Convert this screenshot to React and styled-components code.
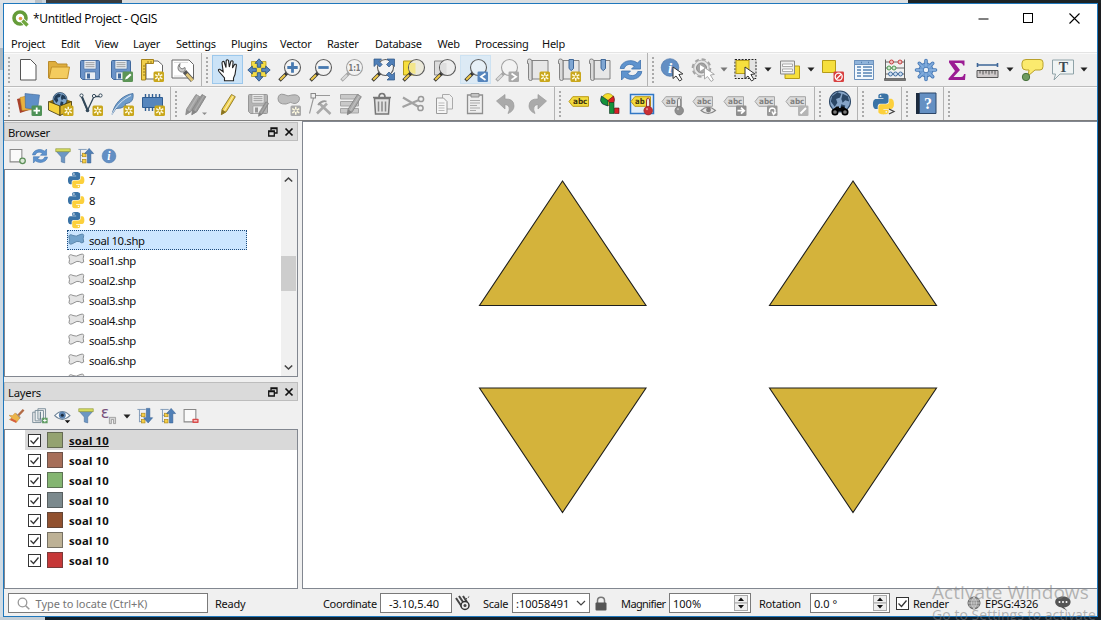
import React from "react";
import styled, { createGlobalStyle } from "styled-components";

const Global = createGlobalStyle`
  * { box-sizing: border-box; }
  html, body { margin: 0; padding: 0; overflow: hidden; }
  body { font-family: "Noto Sans", "Open Sans", sans-serif; font-size: 11px; letter-spacing: -0.25px; color: #101010; }
`;

/* ---------- frame ---------- */
const Desktop = styled.div`
  position: relative;
  width: 1101px;
  height: 620px;
  padding: 3px;
  overflow: hidden;
  background:
    linear-gradient(90deg, #dfe3e7 0 35px, #b9c0c6 35px 42px, #c9d3dc 42px 46px, #393b3d 46px 122px, #dcdfe1 122px 908px, #1d2426 908px) 0 0 / 100% 3px no-repeat,
    linear-gradient(90deg, #c4ced6 0 45px, #12202b 45px) 0 100% / 100% 3px no-repeat,
    linear-gradient(#d9dfe4 0 48px, #aeb9c2 48px 70px, #d0dbe4 70px) 0 0 / 3px 100% no-repeat,
    #1c1d20;
`;
const Window = styled.div`
  display: flex;
  flex-direction: column;
  width: 1095px;
  height: 614px;
  border: 1px solid #1f78bd;
  background: #f0f0f0;
`;
const TitleBar = styled.div`
  display: flex;
  align-items: center;
  flex: 0 0 29px;
  padding-left: 8px;
  background: #fff;
`;
const Title = styled.div`
  flex: 1;
  margin-left: 4px;
  font: 12px "Open Sans", sans-serif;
  letter-spacing: -0.32px;
  color: #000;
`;
const WindowButton = styled.div`
  display: flex;
  justify-content: center;
  width: 45.5px;
`;
const MenuBar = styled.div`
  display: flex;
  flex: 0 0 20px;
  min-height: 0;
  padding-left: 7px;
  background: #fff;
  border-bottom: 1px solid #e4e4e4;
  line-height: 22px;
`;
const MenuItem = styled.div`
  width: ${(p) => p.$w}px;
  white-space: nowrap;
`;

/* ---------- toolbars ---------- */
const ToolRow = styled.div`
  display: flex;
  flex: 0 0 34px;
  border-bottom: 1px solid ${(p) => (p.$last ? "#7d7d7d" : "#bcbcbc")};
  box-shadow: inset 0 1px #fafafa;
`;
const Section = styled.div`
  display: flex;
  align-items: center;
  width: ${(p) => p.$w}px;
  flex-shrink: 0;
  border-right: ${(p) => (p.$open ? 0 : 1)}px solid #b3b3b3;
`;
const Handle = styled.div`
  flex: 0 0 ${(p) => p.$w}px;
  height: 28px;
  background: radial-gradient(circle at 1.2px 1.2px, #aaa 0 1px, transparent 1.3px) 4px 1px / 100px 4px repeat-y;
`;
const ToolButton = styled.div`
  display: flex;
  align-items: center;
  justify-content: center;
  flex: 0 0 31px;
  height: 29px;
  border: 1px solid ${(p) => (p.$on ? (p.$soft ? "#cde2f2" : "#9cc8ec") : "transparent")};
  background: ${(p) => (p.$on ? (p.$soft ? "#dceaf5" : "#cbe3f7") : "transparent")};
`;
const Drop = styled.div`
  flex: 0 0 12.5px;
  display: flex;
  justify-content: center;
`;
const Glyph = styled.svg`
  display: block;
  flex: none;
  overflow: visible;
  letter-spacing: 0;
`;

/* ---------- panels ---------- */
const Body = styled.div`
  display: flex;
  flex: 0 0 468px;
`;
const Side = styled.div`
  width: 294px;
  padding-top: 1px;
`;
const DockTitle = styled.div`
  display: flex;
  align-items: center;
  height: 19px;
  padding: 0 2px 0 3px;
  background: #dadada;
  border: 1px solid #bdbdbd;
  font-size: 11.3px;
  gap: 5px;
`;
const DockName = styled.span`
  flex: 1;
  padding-top: 2px;
`;
const DockTools = styled.div`
  display: flex;
  align-items: center;
  height: 28px;
  padding: 2px 0 0 4px;
  gap: 5px;
`;
const Tree = styled.div`
  display: flex;
  height: 208px;
  margin-bottom: 5px;
  border: 1px solid #828790;
  background: #fff;
  overflow: hidden;
`;
const TreeRows = styled.div`
  flex: 1;
  padding-left: 62px;
`;
const TreeRow = styled.div`
  display: flex;
  align-items: center;
  gap: 4px;
  width: 180px;
  height: 20px;
  padding-left: 1px;
  outline: ${(p) => (p.$on ? "1px dotted #1c4a7c" : "0")};
  outline-offset: -1px;
  background: ${(p) => (p.$on ? "#cce6ff" : "transparent")};
`;
const RowText = styled.span`
  padding-top: 1px;
  font-size: 11.3px;
  letter-spacing: -0.38px;
`;
const Scroll = styled.div`
  display: flex;
  flex-direction: column;
  align-items: center;
  width: 16px;
  padding: 7px 1px 6px 0;
  background: #f0f0f0;
`;
const Thumb = styled.div`
  width: 15px;
  height: 35px;
  margin: 74px 0 auto;
  background: #cdcdcd;
`;
const LayerList = styled.div`
  height: 160px;
  padding-left: 20px;
  border: 1px solid #828790;
  background: #fff;
`;
const LayerRow = styled.div`
  display: flex;
  align-items: center;
  height: 20px;
  padding-left: 3px;
  background: ${(p) => (p.$on ? "#d9d9d9" : "#fff")};
  font-weight: 700;
  font-size: 11.3px;
  letter-spacing: 0.15px;
  text-decoration: ${(p) => (p.$on ? "underline" : "none")};
`;
const Swatch = styled.div`
  width: 16px;
  height: 16px;
  margin: 0 6px;
  background: ${(p) => p.$c};
  border: 1px solid rgba(60, 60, 60, 0.55);
`;
const Canvas = styled.div`
  width: 795px;
  margin-left: 4px;
  border: 1px solid #828790;
  border-right: 0;
  background: #fff;
`;

/* ---------- status bar ---------- */
const Status = styled.div`
  display: flex;
  align-items: center;
  flex: 1;
  padding: 1px 0 0 4px;
`;
const StatusText = styled.div`
  width: ${(p) => p.$w}px;
  margin-left: ${(p) => p.$ml || 0}px;
  padding-top: 1px;
  white-space: nowrap;
  letter-spacing: ${(p) => (p.$ls === undefined ? -0.25 : p.$ls)}px;
`;
const Field = styled.div`
  display: flex;
  align-items: center;
  width: ${(p) => p.$w}px;
  height: 20px;
  margin-left: ${(p) => p.$ml || 0}px;
  padding: 0 2px 0 ${(p) => p.$pl || 3}px;
  border: 1px solid #7a7a7a;
  background: #fff;
  color: ${(p) => p.$c || "#101010"};
  white-space: nowrap;
`;
const Value = styled.span`
  flex: 1;
  padding-top: 1px;
  letter-spacing: ${(p) => p.$ls || 0}px;
`;
const StatusIcon = styled.div`
  width: ${(p) => p.$w}px;
  margin-left: ${(p) => p.$ml || 0}px;
`;
const Watermark = styled.div`
  position: absolute;
  left: 932px;
  top: 580px;
  white-space: nowrap;
  font-family: "Open Sans", sans-serif;
  letter-spacing: 0.05px;
  color: rgba(125, 125, 125, 0.55);
`;
const MarkTitle = styled.div`
  font-size: 19px;
  line-height: 25px;
`;
const MarkLine = styled.div`
  font-size: 14px;
  line-height: 20px;
`;

/* ---------- shared drawing parts ---------- */
const G = ({ s = 24, v = 24, h, vh, children }) => (
  <Glyph width={s} height={h || s} viewBox={`0 0 ${v} ${vh || v}`} fill="none">{children}</Glyph>
);
const Star = ({ x = 13.5, y = 13.5, c = "#c9a71c" }) => (
  <g transform={`translate(${x} ${y})`}>
    <rect width="10.5" height="10.5" rx="1.5" fill={c} />
    <path d="M5.25 1.2v8.1M1.7 3.2l7.1 4.1M1.7 7.3l7.1-4.1" stroke="#fffbe0" strokeWidth="1.5" />
    <circle cx="5.25" cy="5.25" r="1.2" fill={c} />
  </g>
);
const Lens = ({ gray, fill = "#f3f3f3", children }) => (
  <>
    <path d="M1.5 22.5 9 15" stroke={gray ? "#a5a5a5" : "#333"} strokeWidth="3.4" />
    <path d="M2.2 21.8 7 17" stroke={gray ? "#dadada" : "#edc94c"} strokeWidth="2" />
    <circle cx="14.5" cy="9.5" r="8" fill={fill} stroke={gray ? "#a0a0a0" : "#5c5c5c"} strokeWidth="1.1" />
    {children}
  </>
);
const Arrow = ({ x = 11, y = 10, gray }) => (
  <path transform={`translate(${x} ${y})`} d="M0 0v11.5l3-2.5 3.6 5 2.3-1.5-3-5 4-.6z" fill="#fff" stroke={gray ? "#aaa" : "#333"} strokeWidth="1" />
);
const PY = "M14.25.18l.9.2.73.26.59.3.45.32.34.34.25.34.16.33.1.3.04.26.02.2-.01.13V8.5l-.05.63-.13.55-.21.46-.26.38-.3.31-.33.25-.35.19-.35.14-.33.1-.3.07-.26.04-.21.02H8.77l-.69.05-.59.14-.5.22-.41.27-.33.32-.27.35-.2.36-.15.37-.1.35-.07.32-.04.27-.02.21v3.06H3.17l-.21-.03-.28-.07-.32-.12-.35-.18-.36-.26-.36-.36-.35-.46-.32-.59-.28-.73-.21-.88-.14-1.05-.05-1.23.06-1.22.16-1.04.24-.87.32-.71.36-.57.4-.44.42-.33.42-.24.4-.16.36-.1.32-.05.24-.01h.16l.06.01h8.16v-.83H6.18l-.01-2.75-.02-.37.05-.34.11-.31.17-.28.25-.26.31-.23.38-.2.44-.18.51-.15.58-.12.64-.1.71-.06.77-.04.84-.02 1.27.05zm-6.3 1.98l-.23.33-.08.41.08.41.23.34.33.22.41.09.41-.09.33-.22.23-.34.08-.41-.08-.41-.23-.33-.33-.22-.41-.09-.41.09z";
const Py = () => (
  <>
    <path d={PY} fill="#3a73a6" />
    <path d={PY} fill="#fcd03c" transform="rotate(180 12 12)" />
  </>
);
const Tag = ({ gray, text = "abc", children }) => (
  <>
    <path d="M1 9.500 4.800 4.700H20.500V14.300H4.800z" fill={gray ? "#dcdcdc" : "#f2da3c"} stroke={gray ? "#a6a6a6" : "#bb9a14"} strokeWidth="1" />
    <text x="5" y="12.200" fontFamily="DejaVu Sans" fontSize="7.800" fontWeight="700" textLength={text.length * 4.8} lengthAdjust="spacingAndGlyphs" fill={gray ? "#808080" : "#3d3510"}>{text}</text>
    {children}
  </>
);
const Pin = ({ c, d }) => (
  <>
    <path d="M16.500 9q0-3 1.600-3t1.600 3v7h-3.200z" fill="#eee" stroke={d} strokeWidth=".9" />
    <circle cx="18.200" cy="18.600" r="4.300" fill={c} stroke={d} strokeWidth=".7" />
    <circle cx="17" cy="17.200" r="1.100" fill="#fff" opacity=".45" />
  </>
);
const Floppy = ({ c = "#6b93c8", d = "#40689c", l = "#e9eef4" }) => (
  <>
    <path d="M2.500 3.500q0-1 1-1h17q1 0 1 1v17q0 1-1 1H4.500l-2-2z" fill={c} stroke={d} />
    <path d="M6 2.500h12v8.500H6z" fill={l} stroke={d} strokeWidth=".6" />
    <path d="M7.500 4.700h9M7.500 6.700h9M7.500 8.700h9" stroke="#888" strokeWidth=".8" />
    <path d="M7 14h10.500v7.500H7z" fill={l} stroke={d} strokeWidth=".6" />
    <path d="M9 15.500h3v5H9z" fill={d} />
  </>
);
const Refresh = () => (
  <>
    <path d="M1.200 10.500C2 3.500 12 0 18.500 5l3-3v9h-9l3-3C11 5 6.500 6.500 5.200 10.500z" fill="#5e93ce" stroke="#3d71ad" strokeWidth=".8" />
    <path d="M22.800 13.500C22 20.500 12 24 5.500 19l-3 3v-9h9l-3 3c4.500 3 9 1.500 10.300-2.500z" fill="#5e93ce" stroke="#3d71ad" strokeWidth=".8" />
  </>
);
const Page = () => <path d="M4.500 1.500h10l5.500 5.500v15h-15.500z" fill="#fff" stroke="#555" />;
const Book = () => (
  <>
    <path d="M6 2.500h16v18.500H6z" fill="#e7e7e7" stroke="#777" strokeWidth=".9" />
    <path d="M1.500 2.500q0-1.500 2-1.500t2.500 2v17.500q1 2-1.500 2-2 0-2-2V5.500h-1z" fill="#dadada" stroke="#777" strokeWidth=".9" />
  </>
);
const Ribbon = ({ x = 12 }) => <path d={`M${x} 1.500h4.500v9l-2.250 2.200-2.250-2.200z`} fill="#7fa6d2" stroke="#345f92" strokeWidth=".9" />;
const Globe = ({ cx = 12, cy = 9, r = 8, c = "#7fa7ce", d = "#203c58" }) => (
  <g transform={`translate(${cx} ${cy}) scale(${r / 8})`}>
    <circle r="8" fill={c} stroke={d} strokeWidth=".8" />
    <path d="M-6-4l4-3 3 1-1 3-3 1 1 3-2 3-3-4zM2-6l4 2 1 4-3-1-2 2-1-3zM1 2l3 1-1 4-3-1z" fill={d} />
  </g>
);
const Funnel = () => (
  <>
    <path d="M2 5h20l-7.500 8.500V22l-5-1.500v-7z" fill="#6c97c4" stroke="#4a709a" strokeWidth=".8" />
    <path d="M1.500 1.500h21v4.200h-21z" fill="#d5dc5e" stroke="#8b9338" strokeWidth=".9" />
  </>
);
const TreeArrow = ({ down }) => (
  <>
    <path d="M1 2.500h12M4 2.500v18.500M4 11h5M4 20h5" stroke="#7b95b5" strokeWidth="1.300" />
    <rect x="7" y="8" width="5" height="5" fill="#f5cf47" stroke="#b08a1b" />
    <rect x="7" y="17" width="5" height="5" fill="#f5cf47" stroke="#b08a1b" />
    <path d="M16.500 1l6.500 7.500h-4V22h-5V8.500h-4z" fill="#4f7fb6" stroke="#2f5b8f" strokeWidth=".8" transform={down ? "rotate(180 16.500 11.500)" : undefined} />
  </>
);
const Info = ({ cx = 12, cy = 12, r = 9.500 }) => (
  <>
    <circle cx={cx} cy={cy} r={r} fill="#638fc4" stroke="#4a76aa" strokeWidth=".7" />
    <text x={cx} y={cy + r * 0.580} textAnchor="middle" fontFamily="Liberation Serif" fontStyle="italic" fontWeight="700" fontSize={r * 1.700} fill="#fff">i</text>
  </>
);
const Pencil = ({ c = "#f1d14d", d = "#8a7420", x = 0, shine = 0.55 }) => (
  <g transform={`translate(${x} 0)`}>
    <path d="M16.500 2.500l3.800 2.200-9 15-5 3 .8-5.500z" fill={c} stroke={d} strokeWidth=".9" />
    <path d="M18.300 3.800l-9 15" stroke="#fff" opacity={shine} strokeWidth="1.200" />
    <path d="M7 17.500l4 2.400-4.700 2.800z" fill={d} />
  </g>
);
const Badge = ({ c, children, x = 13.500, y = 13.500 }) => (
  <g transform={`translate(${x} ${y})`}>
    <rect width="10.500" height="10.500" rx="1.300" fill={c} />
    {children}
  </g>
);
const Caret = ({ c = "#222" }) => <G s={8} v={8} h={5} vh={5}><path d="M.5.5h7L4 4.500z" fill={c} /></G>;

/* ---------- icons ---------- */
const I = {
  newFile: <Page />,
  open: <><path d="M1.500 20V3.500h7l2 2.500H20v4" fill="#dfae3d" stroke="#b98b2c" /><path d="M2 20.500 4.500 9H22.500L20.500 20.500z" fill="#f4cc5f" stroke="#c2922c" /></>,
  save: <Floppy />,
  saveAs: <><Floppy /><Badge c="#5c9556"><path d="M2.500 8l1-2.500L7.500 2 9 3.500 5 7.300z" fill="#fff" /></Badge></>,
  layout: <><path d="M6 3h12l4.500 4v14H6z" fill="#fff" stroke="#666" /><path d="M1.500 1.500h12v4h-8V22h-4z" fill="#f1cf4b" stroke="#a5821c" /><path d="M3 8h2M3 11h2M3 14h2M3 17h2M8 3v2M11 3v2" stroke="#7c6215" strokeWidth=".8" /><Star /></>,
  manager: <><path d="M1 2h17l4.500 4.500V20H1z" fill="#fff" stroke="#666" /><path d="M3 4.500h14M3 18h9" stroke="#ddd" /><path d="M13.500 13.500l8 9" stroke="#555" strokeWidth="4.500" /><path d="M15.500 16l6 6.500" stroke="#e1c779" strokeWidth="3" /><path d="M9 5.500l-.5 3.500 2.500 2 3-1.500c1 3-1 5-3.500 4.500C7 13.500 5.500 9 9 5.500z" fill="#ccc" stroke="#666" strokeWidth=".8" /></>,
  hand: <path d="M8.500 22.800V20L3 13.500q-1.500-2.500.8-2.300l3.400 2.600L6 5q.2-2 2-1.500L10 9.500 10.200 2.500q1-1.600 2.300 0L13.300 9l1.600-5.800q1.500-1 2.200.5L16.500 10l2.200-3.700q1.600-.5 1.700 1L19 16.500 17.500 20v2.800z" fill="#fff" stroke="#222" strokeWidth="1.100" />,
  pan: <><path d="M4.500 3.500h14.500v15H4.500z" fill="#f6dd43" stroke="#a98f16" strokeWidth=".7" /><path d="M12 .8l4 4.500h-2.300v4h-3.400v-4H8zM12 23.200l4-4.500h-2.300v-4h-3.400v4H8zM.8 12l4.500-4v2.300h4v3.400h-4V16zM23.200 12l-4.500-4v2.300h-4v3.400h4V16z" fill="#5585bf" stroke="#284f80" strokeWidth=".8" /></>,
  zoomIn: <Lens><path d="M14.500 4.300v10.400M9.300 9.500h10.400" stroke="#4779b0" strokeWidth="2.800" /></Lens>,
  zoomOut: <Lens><path d="M9.300 9.500h10.400" stroke="#4779b0" strokeWidth="2.800" /></Lens>,
  zoomOne: <Lens gray><text x="14.500" y="12.600" textAnchor="middle" fontFamily="DejaVu Sans" fontWeight="700" fontSize="8.500" textLength="12" lengthAdjust="spacingAndGlyphs" fill="#777">1:1</text></Lens>,
  zoomFull: <><rect x="7" y="4" width="12" height="12" fill="#eee" /><Lens><path d="M3 1h7.500L8.200 3.500l3 3-2.500 2.500-3-3L3 8.500zM23.500 1v7.500L21 6l-3 3-2.500-2.500 3-3L16 1zM23.500 22V14.500L21 17l-3-3-2.500 2.500 3 3L16 22z" fill="#4f7fb8" stroke="#2c5383" strokeWidth=".7" /></Lens></>,
  zoomSel: <><path d="M1.500 3h12v14h-12z" fill="#f7df3d" stroke="#b49b1b" /><Lens fill="#eceadb"><path d="M8 5h5.500v11q-7-1-6.500-7z" fill="#f3e68a" /></Lens></>,
  zoomLayer: <><path d="M1.500 3h12v14h-12z" fill="#dcdcdc" stroke="#888" /><Lens fill="#ededed"><path d="M8 5h5.500v11q-7-1-6.500-7z" fill="#dedede" /></Lens></>,
  zoomLast: <Lens fill="#e7f0f7"><Badge c="#5685bd"><path d="M8 2L3.300 5.200 8 8.500" stroke="#fff" strokeWidth="1.700" /></Badge></Lens>,
  zoomNext: <Lens gray><Badge c="#a9a9a9"><path d="M3 2l4.700 3.200L3 8.500" stroke="#fff" strokeWidth="1.700" /></Badge></Lens>,
  newBook: <><Book /><Star /></>,
  newMark: <><Book /><Ribbon /><Star /></>,
  showMark: <><Book /><Ribbon x={13} /></>,
  refresh: <Refresh />,
  identify: <><Info cx={10} cy={9.500} r={8.800} /><Arrow x={13} y={9} /></>,
  action: <><circle cx="10.500" cy="10" r="8.300" stroke="#a3a3a3" strokeWidth="3" strokeDasharray="3.800 2.700" /><circle cx="10.500" cy="10" r="7.800" fill="#e6e6e6" stroke="#b3b3b3" /><circle cx="10.500" cy="10" r="5" fill="#a5a5a5" stroke="#8c8c8c" /><path d="M9 7v6l5-3z" fill="#fff" /><Arrow gray x={13.500} y={9.500} /></>,
  select: <><rect x="1" y="1.500" width="21" height="19" fill="#e3e3e3" stroke="#222" strokeDasharray="2 1.300" /><rect x="2" y="2.500" width="13" height="13" fill="#f6df3d" stroke="#b69c18" /><Arrow x={11} y={9} /></>,
  form: <><path d="M7 8h14.500v12.500H7z" fill="#f6df3d" stroke="#b69c18" /><path d="M2.500 3h14v13h-14z" fill="#ededed" stroke="#888" /><path d="M4.500 6h10v2.500h-10zM4.500 11h10v2.500h-10z" fill="#fff" stroke="#999" strokeWidth=".8" /></>,
  deselect: <><path d="M1.500 2.500h13v12h-13z" fill="#f6df3d" stroke="#b69c18" /><Badge c="#d84040" x={12.500}><circle cx="5.200" cy="5.200" r="3.500" stroke="#fff" strokeWidth="1.300" /><path d="M3 7.500l4.500-4.500" stroke="#fff" strokeWidth="1.300" /></Badge></>,
  table: <><path d="M2.500 2.500h19v19h-19z" fill="#f3f8fd" stroke="#6a90bc" /><path d="M2.500 2.500h19v4h-19z" fill="#8fb3da" stroke="#6a90bc" /><path d="M5 9h4M11 9h9M5 12h4M11 12h9M5 15h4M11 15h9M5 18h4M11 18h9M9 4.500h1M16 4.500h1" stroke="#5682b4" strokeWidth="1.300" /></>,
  abacus: <><path d="M2.500 1.500v20M21.500 1.500v20M2.500 4h19M2.500 10h19M2.500 16h19" stroke="#555" strokeWidth=".9" /><path d="M1.500 20.500h21v2h-21z" fill="#777" stroke="#444" strokeWidth=".6" /><g strokeWidth=".9"><g fill="#eec1c1" stroke="#c03030"><circle cx="8.500" cy="4" r="2" /><circle cx="17" cy="4" r="2" /></g><g fill="#cfe8cf" stroke="#3f8e43"><circle cx="6" cy="10" r="2" /><circle cx="11" cy="10" r="2" /></g><g fill="#cfdff2" stroke="#35649a"><circle cx="7.500" cy="16" r="2" /><circle cx="12.500" cy="16" r="2" /><circle cx="17.500" cy="16" r="2" /></g></g></>,
  gear: <><g stroke="#4678b5" strokeWidth="3.600" strokeLinecap="round"><path d="M12 2.500v19M2.500 12h19M5.300 5.300l13.400 13.400M18.700 5.300L5.300 18.700" /></g><circle cx="12" cy="12" r="7" fill="#6d9cd2" stroke="#4678b5" /><g stroke="#82acdc" strokeWidth="1.800" strokeLinecap="round"><path d="M12 2.500v19M2.500 12h19M5.300 5.300l13.400 13.400M18.700 5.300L5.300 18.700" /></g><circle cx="12" cy="12" r="2.800" fill="#eef3f8" stroke="#4678b5" /></>,
  sum: <path d="M4 2.500h15.500v5H18q0-2.500-3-2.500H9.500l5.500 7-6.500 7H16q2.500 0 3-3h1.500l-.5 6H3.500v-1.500L10 13 4 4.500z" fill="#9b1c93" />,
  ruler: <><path d="M1 7h21M1.500 5v4M21.500 5v4" stroke="#3d6597" strokeWidth="1.600" /><path d="M1 12.500h21v7H1z" fill="#cfcaca" stroke="#555" /><path d="M4 12.500v3M7 12.500v4M10 12.500v3M13 12.500v4M16 12.500v3M19 12.500v4" stroke="#444" strokeWidth=".9" /></>,
  tip: <><path d="M6 1.500h14q3 0 3 3v4q0 3.500-3 3.500h-5l-7 6 1-6H6q-4 0-4-4v-3q0-3.500 4-3.500z" fill="#fbea6e" stroke="#b9a12b" /><circle cx="6" cy="19" r="3.700" fill="#6f9c5e" stroke="#47703d" /></>,
  textAnn: <><path d="M1.500 2h21v14H9l-6 6 1.500-6h-3z" fill="#f0f4f4" stroke="#8fa3a8" /><text x="12.500" y="13.500" textAnchor="middle" fontFamily="Liberation Serif" fontWeight="700" fontSize="14" fill="#3d4b52">T</text></>,

  dataSource: <><path d="M0 7l12-3 3 13-12 4z" fill="#a8402a" /><path d="M3 5.500l13-3 1 15-12 1z" fill="#e9b13e" stroke="#b5801c" strokeWidth=".5" /><path d="M8 1.500l14.500 1.500-2 14.500-12-1.500z" fill="#5f8fc7" stroke="#3f6a9f" strokeWidth=".6" /><Badge c="#4f9257" x={14.500}><path d="M5.200 2v6.500M2 5.200h6.500" stroke="#fff" strokeWidth="1.800" /></Badge></>,
  geopackage: <><path d="M.5 9.500 12 5l12 4.500L12 15z" fill="#8a6c10" /><Globe cx={12} cy={7.500} r={7} /><path d="M.5 9.500 12 14v9.500L.5 18z" fill="#f4d23c" stroke="#3a300a" strokeWidth=".8" /><path d="M23.500 9.500 12 14v9.500l11.500-5.500z" fill="#d9b22b" stroke="#3a300a" strokeWidth=".8" /><Star x={15} /></>,
  shape: <><path d="M2.500 4l6 14.500L15 4.500h6" stroke="#34495a" strokeWidth="1.300" /><path d="M3 5l5.500 13" stroke="#34495a" strokeWidth="2" /><g fill="#fff" stroke="#34495a"><circle cx="2.500" cy="3.500" r="1.600" /><circle cx="15" cy="4" r="1.600" /><circle cx="21.500" cy="3.500" r="1.600" /></g><circle cx="8.500" cy="18.500" r="1.800" fill="#34495a" /><Star /></>,
  feather: <><path d="M2 22.500C4 12 12 3 23 1.500q1 6-3 9l-5 1.500 1 1.500q-5 3.500-10 3z" fill="#6e9ccb" stroke="#3f6a99" strokeWidth=".8" /><path d="M1.500 23C6 14 13 7 21 3.500" stroke="#e3edf6" strokeWidth=".9" /><Star /></>,
  chip: <><path d="M4.500 2v17M8 2v17M11.500 2v17M15 2v17M18.500 2v17" stroke="#315e92" strokeWidth="1.400" /><path d="M1.500 5.500h20v10h-20z" fill="#5686bd" stroke="#2f5d92" /><Star /></>,
  edits: <><Pencil c="#a4a4a4" d="#8e8e8e" x={-4.500} shine={0.2} /><Pencil c="#989898" d="#858585" x={1.500} shine={0.2} /><path d="M18 20.500h5l-2.500 2.500z" fill="#8d8d8d" /></>,
  edit: <Pencil />,
  saveEdits: <><Floppy c="#b5b5b5" d="#979797" l="#ececec" /><g transform="translate(8 8) scale(.72)"><Pencil c="#999" d="#808080" shine={0.2} /></g></>,
  polygon: <><path d="M1 6.500Q1.500 1 7 2.500q4 2.500 8 .5 7-1 7.500 3.500-.5 5-5.500 5-3-2.500-8 .5Q1 12.500 1 6.500z" fill="#bdbdbd" stroke="#999" /><Star c="#a9a9a9" /></>,
  vertex: <><path d="M1.500 21.500L6 4M4.500 3.500H22" stroke="#999" strokeWidth="1.100" /><rect x="3" y="1.500" width="4.500" height="4.500" fill="#eee" stroke="#888" /><path d="M9 21.500l10-10M11 11l11.500 11" stroke="#aaa" strokeWidth="2.600" /><path d="M10 13q4-5 8.500-3.500" stroke="#999" strokeWidth="1.800" /></>,
  attrs: <><path d="M1.500 2.500h18v4.500h-18zM1.500 9.500h18V14h-18zM1.500 16.500h18V21h-18z" fill="#c9c9c9" stroke="#a5a5a5" /><Pencil c="#aaa" d="#858585" x={2} shine={0.25} /></>,
  trash: <><path d="M4.500 6.500h15l-1 15.500h-13z" fill="#e2e2e2" stroke="#777" strokeWidth="1.500" /><path d="M3 5.500h18M9 5q0-3.500 3-3.500t3 3.500" stroke="#777" strokeWidth="1.700" /><path d="M8.500 9.500v10M12 9.500v10M15.500 9.500v10" stroke="#888" strokeWidth="1.500" /></>,
  cut: <><path d="M2 5.500l15 9M1.500 15L18 8" stroke="#a2a2a2" strokeWidth="2.200" /><circle cx="20" cy="7" r="2.600" stroke="#999" strokeWidth="1.500" /><circle cx="19.500" cy="16" r="2.600" stroke="#999" strokeWidth="1.500" /></>,
  copy: <><path d="M10.500 2.500h7l3 3V17h-10z" fill="#f0f0f0" stroke="#aaa" /><path d="M4.500 6h7l3.500 3.500v12H4.500z" fill="#f6f6f6" stroke="#9a9a9a" /><path d="M6.500 11h6M6.500 13.500h6M6.500 16h6M6.500 18.500h6" stroke="#bbb" /></>,
  paste: <><path d="M4.500 3h15v18.500h-15z" fill="#eee" stroke="#8f8f8f" strokeWidth="1.300" /><path d="M8 1.500h8V5H8z" fill="#c5c5c5" stroke="#8f8f8f" /><path d="M7 8.500h10M7 11h10M7 13.500h7M7 16h10M7 18.500h6" stroke="#aaa" /></>,
  undo: <path d="M2.500 9L11 2.500V7q9-.5 9 7 0 5-6 7.500 2-4 1-6.500-1-2.500-4-2.500v4.500z" fill="#aaa" stroke="#999" strokeWidth=".7" />,
  redo: <path d="M21.500 9L13 2.500V7q-9-.5-9 7 0 5 6 7.500-2-4-1-6.500 1-2.500 4-2.500v4.500z" fill="#aaa" stroke="#999" strokeWidth=".7" />,
  label: <Tag />,
  diagram: <><circle cx="9" cy="7.500" r="6" fill="#f6df2c" stroke="#8a7a10" strokeWidth=".6" /><path d="M9 8.500L2.500 4Q0 9 3.500 12L9 14z" fill="#15923a" stroke="#114" strokeWidth=".6" /><path d="M9 8.500l5.500-4.500q2.500 6-2 9.500z" fill="#d81f26" stroke="#411" strokeWidth=".6" /><path d="M10.500 10.500H15v11h-4.500z" fill="#15923a" stroke="#132" strokeWidth=".6" /><path d="M15.500 16h4.500v5.500h-4.500z" fill="#d81f26" stroke="#411" strokeWidth=".6" /></>,
  pinOn: <><rect x=".5" y="2.500" width="23" height="19" fill="#e2edf8" stroke="#3177c5" strokeWidth="1.500" /><Tag text="ab"><Pin c="#c92f35" d="#8d2126" /></Tag></>,
  pin: <Tag gray text="ab"><Pin c="#8f8f8f" d="#757575" /></Tag>,
  eye: <Tag gray><path d="M9 18.500q7-6.500 14.500 0-7.500 6-14.500 0z" fill="#e9e9e9" stroke="#888" strokeWidth="1.100" /><circle cx="16.500" cy="18" r="2.400" fill="#808080" /></Tag>,
  move: <Tag gray><Badge c="#8f8f8f" x={13}><path d="M1.500 5.200h6M5 2.200l3.200 3L5 8.200" stroke="#fff" strokeWidth="1.800" /></Badge></Tag>,
  rotate: <Tag gray><Badge c="#999" x={13}><path d="M2.500 6.500q-.5-4 3-4 3 .2 2.500 3.500L7 8M5 6l1.500 3L9 6.500" stroke="#fff" strokeWidth="1.400" /></Badge></Tag>,
  change: <Tag gray><Badge c="#b5b5b5" x={13}><path d="M2.500 8L8 2.500" stroke="#fff" strokeWidth="2" /></Badge></Tag>,
  search: <><Globe cx={12} cy={9.500} r={10.500} c="#86a5c8" d="#2b4766" /><path d="M4 18.500L8.500 14.500h2.500v1.500h2v-1.500h2.500l4.500 4" fill="#080808" /><path d="M9 18h6" stroke="#080808" strokeWidth="3" /><circle cx="7" cy="20" r="2.700" fill="#777" stroke="#000" strokeWidth="1.700" /><circle cx="17" cy="20" r="2.700" fill="#777" stroke="#000" strokeWidth="1.700" /></>,
  console: <><g transform="translate(1 1.500) scale(.87)"><Py /></g><path d="M17 17l5 2.500-5 2.500" stroke="#444" strokeWidth="1.300" /></>,
  help: <><path d="M2 1h4v21H2z" fill="#1c2b3e" /><path d="M5.500 1H22v20.500H5.500z" fill="#6590c3" stroke="#2c4668" /><text x="14" y="17" textAnchor="middle" fontFamily="Liberation Serif" fontWeight="700" fontSize="16" fill="#fff">?</text></>,
};

const D = {
  add: <><path d="M2 2.500h17v18H2z" fill="#fafafa" stroke="#888" strokeWidth="1.500" /><circle cx="20" cy="19" r="4" fill="#dbe8d8" stroke="#5c8f58" strokeWidth="1.800" /></>,
  refresh: <Refresh />,
  funnel: <Funnel />,
  up: <TreeArrow />,
  down: <TreeArrow down />,
  info: <Info r={10} />,
  brush: <><path d="M13 12L21.500 3" stroke="#b26b45" strokeWidth="3.500" /><path d="M10 9l6.500 6" stroke="#999" strokeWidth="3" /><path d="M9.500 7.500L16 15l-5 6.500L1 17l4-2-4.500-4 5 .5z" fill="#ecb54a" stroke="#c78a35" strokeWidth=".8" /><path d="M3 16.500l8 4" stroke="#d75d42" strokeWidth="2.500" /></>,
  group: <><path d="M1.500 6.500h12v15h-12z" fill="#eee" stroke="#7d8f9b" strokeWidth="1.400" /><path d="M5 4h12v15H5z" fill="#eef1f2" stroke="#7d8f9b" strokeWidth="1.400" /><path d="M9 1.500h11v15H9z" stroke="#7d8f9b" strokeWidth="1.400" /><path d="M12.500 17V6" stroke="#57707f" strokeWidth="1.500" /><rect x="15" y="14.500" width="8" height="8" fill="#5f9c63" /><path d="M19 16v5M16.500 18.500h5" stroke="#fff" strokeWidth="1.400" /></>,
  eye: <><path d="M0 11.500q11-12 22 0-11 10.500-22 0z" fill="#fff" stroke="#71869a" strokeWidth="1.700" /><circle cx="11" cy="11" r="5" fill="#5b84b2" /><circle cx="11" cy="11" r="2.200" fill="#1d2e42" /><path d="M14.500 18h8l-4 4.500z" fill="#111" /></>,
  eps: <><text x="0" y="14.500" fontFamily="DejaVu Sans" fontSize="23" fill="#78527c">ε</text><path d="M12.500 23v-9h9V23h-3v-6h-3v6z" fill="#d5d5d5" stroke="#888" /></>,
  remove: <><path d="M2 2.500h17v18H2z" fill="#fafafa" stroke="#888" strokeWidth="1.500" /><rect x="14" y="16" width="9" height="6" rx="1" fill="#d94d4d" /><path d="M16 19h5" stroke="#fff" strokeWidth="1.500" /></>,
};

const Btn = ({ k, on, soft }) => <ToolButton $on={on} $soft={soft}><G>{I[k]}</G></ToolButton>;
const Btns = ({ ks }) => ks.map((k) => (
  <Btn key={k} k={k} on={k === "hand" || k === "zoomLast"} soft={k === "zoomLast"} />
));
const Small = ({ k }) => <G s={18} v={26}><g transform="translate(1 1)">{D[k]}</g></G>;
const Check = () => (
  <G s={13} v={13}><rect x=".5" y=".5" width="12" height="12" fill="#fff" stroke="#333" /><path d="M2.500 6.500l3 3 5-6" stroke="#333" strokeWidth="1.300" /></G>
);
const Spin = () => (
  <G s={14} v={14} h={16} vh={16}>
    <rect x=".5" y=".5" width="13" height="7.500" fill="#efefef" stroke="#aaa" />
    <rect x=".5" y="8" width="13" height="7.500" fill="#efefef" stroke="#aaa" />
    <path d="M4 6l3-3.500L10 6zM4 10h6l-3 3.500z" fill="#111" />
  </G>
);
const DockButtons = () => (
  <>
    <G s={10} v={10}><path d="M3 3.500V1h6v5H6.500M3 1.700h6" stroke="#111" strokeWidth="1.300" /><path d="M.7 4h5.600v5H.7zM.7 4.600h5.600" stroke="#111" strokeWidth="1.300" /></G>
    <G s={12} v={12}><path d="M2.500 2.500l7 7M9.500 2.500l-7 7" stroke="#111" strokeWidth="1.700" /></G>
  </>
);
const Shp = ({ on }) => (
  <G s={17} v={17} h={14} vh={14}><path d="M.8 3.500Q1.500.5 5 2.500q3.500 1.500 6-.5 4.500-2 4.700.5-1 3 0 6.500-1.700 2-4-.3Q9 7.500 6 9.800 1.800 12.500 1 9.800 2.200 6.500.8 3.500z" fill={on ? "#74a4cc" : "#e4e4e4"} stroke={on ? "#5d88ad" : "#919191"} /></G>
);

const menus = [["Project", 50], ["Edit", 34], ["View", 38], ["Layer", 43], ["Settings", 55], ["Plugins", 49], ["Vector", 47], ["Raster", 48], ["Database", 62.5], ["Web", 37.5], ["Processing", 67], ["Help", 40]];
const layers = ["#94a270", "#a66e59", "#84b571", "#7b898d", "#91512f", "#bdb195", "#c63838"];
const files = ["soal 10.shp", "soal1.shp", "soal2.shp", "soal3.shp", "soal4.shp", "soal5.shp", "soal6.shp", "soal7.shp"];
const triangles = ["562.5,181 479.5,305.5 646,305.5", "853,181 769.5,305.5 936.5,305.5", "479.5,388 646,388 562.5,512.5", "769.5,388 936.5,388 853,512.5"];

export default function App() {
  return (
    <Desktop>
      <Global />
      <Window>
        <TitleBar>
          <G s={17} v={17}>
            <circle cx="8" cy="8" r="6" stroke="#659c39" strokeWidth="3.600" />
            <path d="M9 9l6.500 6.500" stroke="#fff" strokeWidth="5" />
            <path d="M10.500 10.500l5 5" stroke="#70a63d" strokeWidth="3.400" />
            <circle cx="8.500" cy="8.500" r="1.800" fill="#e39a45" />
          </G>
          <Title>*Untitled Project - QGIS</Title>
          <WindowButton><G s={11} v={11}><path d="M.5 6h10" stroke="#000" /></G></WindowButton>
          <WindowButton><G s={11} v={11}><rect x=".5" y=".5" width="9" height="9" stroke="#000" /></G></WindowButton>
          <WindowButton><G s={11} v={11}><path d="M.5.5l10 10M10.500.5l-10 10" stroke="#000" strokeWidth="1.100" /></G></WindowButton>
        </TitleBar>
        <MenuBar>{menus.map(([t, w]) => <MenuItem key={t} $w={w}>{t}</MenuItem>)}</MenuBar>
        <ToolRow>
          <Section $w={198}><Handle $w={8} /><Btns ks={["newFile", "open", "save", "saveAs", "layout", "manager"]} /></Section>
          <Section $w={446}><Handle $w={10} /><Btns ks={["hand", "pan", "zoomIn", "zoomOut", "zoomOne", "zoomFull", "zoomSel", "zoomLayer", "zoomLast", "zoomNext", "newBook", "newMark", "showMark", "refresh"]} /></Section>
          <Section $w={447} $open>
            <Handle $w={8} />
            <Btn k="identify" />
            <Btn k="action" /><Drop><Caret c="#777" /></Drop>
            <Btn k="select" /><Drop><Caret /></Drop>
            <Btn k="form" /><Drop><Caret /></Drop>
            <Btns ks={["deselect", "table", "abacus", "gear", "sum", "ruler"]} /><Drop><Caret /></Drop>
            <Btns ks={["tip", "textAnn"]} /><Drop><Caret /></Drop>
          </Section>
        </ToolRow>
        <ToolRow $last>
          <Section $w={167}><Handle $w={9} /><Btns ks={["dataSource", "geopackage", "shape", "feather", "chip"]} /></Section>
          <Section $w={384}><Handle $w={9} /><Btns ks={["edits", "edit", "saveEdits", "polygon", "vertex", "attrs", "trash", "cut", "copy", "paste", "undo", "redo"]} /></Section>
          <Section $w={260}><Handle $w={9} /><Btns ks={["label", "diagram", "pinOn", "pin", "eye", "move", "rotate", "change"]} /></Section>
          <Section $w={43}><Handle $w={9} /><Btns ks={["search"]} /></Section>
          <Section $w={43.5}><Handle $w={10} /><Btns ks={["console"]} /></Section>
          <Section $w={42.5}><Handle $w={9} /><Btns ks={["help"]} /></Section>
          <Section $w={40} $open><Handle $w={10} /></Section>
        </ToolRow>
        <Body>
          <Side>
            <DockTitle><DockName>Browser</DockName><DockButtons /></DockTitle>
            <DockTools>{["add", "refresh", "funnel", "up", "info"].map((k) => <Small key={k} k={k} />)}</DockTools>
            <Tree>
              <TreeRows>
                {["7", "8", "9"].map((t) => (
                  <TreeRow key={t}><G s={17} v={25}><Py /></G><RowText>{t}</RowText></TreeRow>
                ))}
                {files.map((t, i) => (
                  <TreeRow key={t} $on={i === 0}><Shp on={i === 0} /><RowText>{t}</RowText></TreeRow>
                ))}
              </TreeRows>
              <Scroll>
                <G s={9} v={9} h={5} vh={5}><path d="M.8 4.500l3.700-3.500 3.700 3.500" stroke="#444" strokeWidth="1.600" /></G>
                <Thumb />
                <G s={9} v={9} h={5} vh={5}><path d="M.8.5l3.700 3.500L8.200.5" stroke="#444" strokeWidth="1.600" /></G>
              </Scroll>
            </Tree>
            <DockTitle><DockName>Layers</DockName><DockButtons /></DockTitle>
            <DockTools>
              {["brush", "group", "eye", "funnel", "eps"].map((k) => <Small key={k} k={k} />)}
              <Caret />
              {["down", "up", "remove"].map((k) => <Small key={k} k={k} />)}
            </DockTools>
            <LayerList>
              {layers.map((c, i) => (
                <LayerRow key={c} $on={i === 0}><Check /><Swatch $c={c} /><span>soal 10</span></LayerRow>
              ))}
            </LayerList>
          </Side>
          <Canvas>
            <Glyph width="794" height="466" viewBox="303 122 794 466">
              {triangles.map((p) => <polygon key={p} points={p} fill="#d4b33b" stroke="#1f1f1c" strokeWidth="1.100" />)}
            </Glyph>
          </Canvas>
        </Body>
        <Status>
          <Field $w={200} $pl={8} $c="#767676">
            <G s={13} v={13}><circle cx="5.500" cy="5.500" r="4.300" stroke="#999" strokeWidth="1.300" /><path d="M8.700 8.700l3.600 3.600" stroke="#999" strokeWidth="1.500" /></G>
            <Value $ls={-0.05}>&nbsp;&nbsp;Type to locate (Ctrl+K)</Value>
          </Field>
          <StatusText $ml={7} $w={108}>Ready</StatusText>
          <StatusText $w={57} $ls={-0.35}>Coordinate</StatusText>
          <Field $w={72} $pl={8}><Value>-3.10,5.40</Value></Field>
          <StatusIcon $ml={3} $w={28}>
            <G s={16} v={16}><path d="M1 3l6 9M4 1l6 9M8 1l4 6" stroke="#444" strokeWidth="2" /><circle cx="10" cy="10.500" r="4" fill="#eee" stroke="#333" strokeWidth="1.500" /><circle cx="10" cy="10.500" r="1.500" fill="#444" /><path d="M11 4l4-3" stroke="#444" strokeDasharray="1.500 1" /></G>
          </StatusIcon>
          <StatusText $w={29}>Scale</StatusText>
          <Field $w={78}><Value>:10058491</Value><G s={12} v={12}><path d="M2 4l4 4 4-4" stroke="#444" strokeWidth="1.200" /></G></Field>
          <StatusIcon $ml={5} $w={26}>
            <G s={12} v={12} h={15} vh={15}><path d="M2.500 8V4.500q0-3.300 3.500-3.300t3.500 3.300V8" stroke="#777" strokeWidth="1.500" /><rect x=".5" y="6.500" width="11" height="8" rx="1" fill="#555" /></G>
          </StatusIcon>
          <StatusText $w={48} $ls={-0.6}>Magnifier</StatusText>
          <Field $w={82}><Value>100%</Value><Spin /></Field>
          <StatusText $ml={8} $w={51}>Rotation</StatusText>
          <Field $w={80}><Value>0.0 °</Value><Spin /></Field>
          <StatusIcon $ml={6} $w={17}><Check /></StatusIcon>
          <StatusText $w={54}>Render</StatusText>
          <StatusIcon $w={18}>
            <G s={14} v={14}><circle cx="7" cy="7" r="6" fill="#888" stroke="#666" /><path d="M1 7h12M2 4h10M2 10h10M7 1v12M7 1q-5 6 0 12M7 1q5 6 0 12" stroke="#ddd" strokeWidth=".7" /></G>
          </StatusIcon>
          <StatusText $w={70} $ls={-0.2}>EPSG:4326</StatusText>
          <StatusIcon $w={16}>
            <G s={16} v={16}><path d="M8 1.500c10 0 10 10.500 1 10.800L12 15.500 6 12.200c-8-1-8-10.700 2-10.700z" fill="#555" /><g fill="#fff"><circle cx="4.500" cy="7" r="1" /><circle cx="8" cy="7" r="1" /><circle cx="11.500" cy="7" r="1" /></g></G>
          </StatusIcon>
        </Status>
      </Window>
      <Watermark>
        <MarkTitle>Activate Windows</MarkTitle>
        <MarkLine>Go to Settings to activate</MarkLine>
      </Watermark>
    </Desktop>
  );
}
